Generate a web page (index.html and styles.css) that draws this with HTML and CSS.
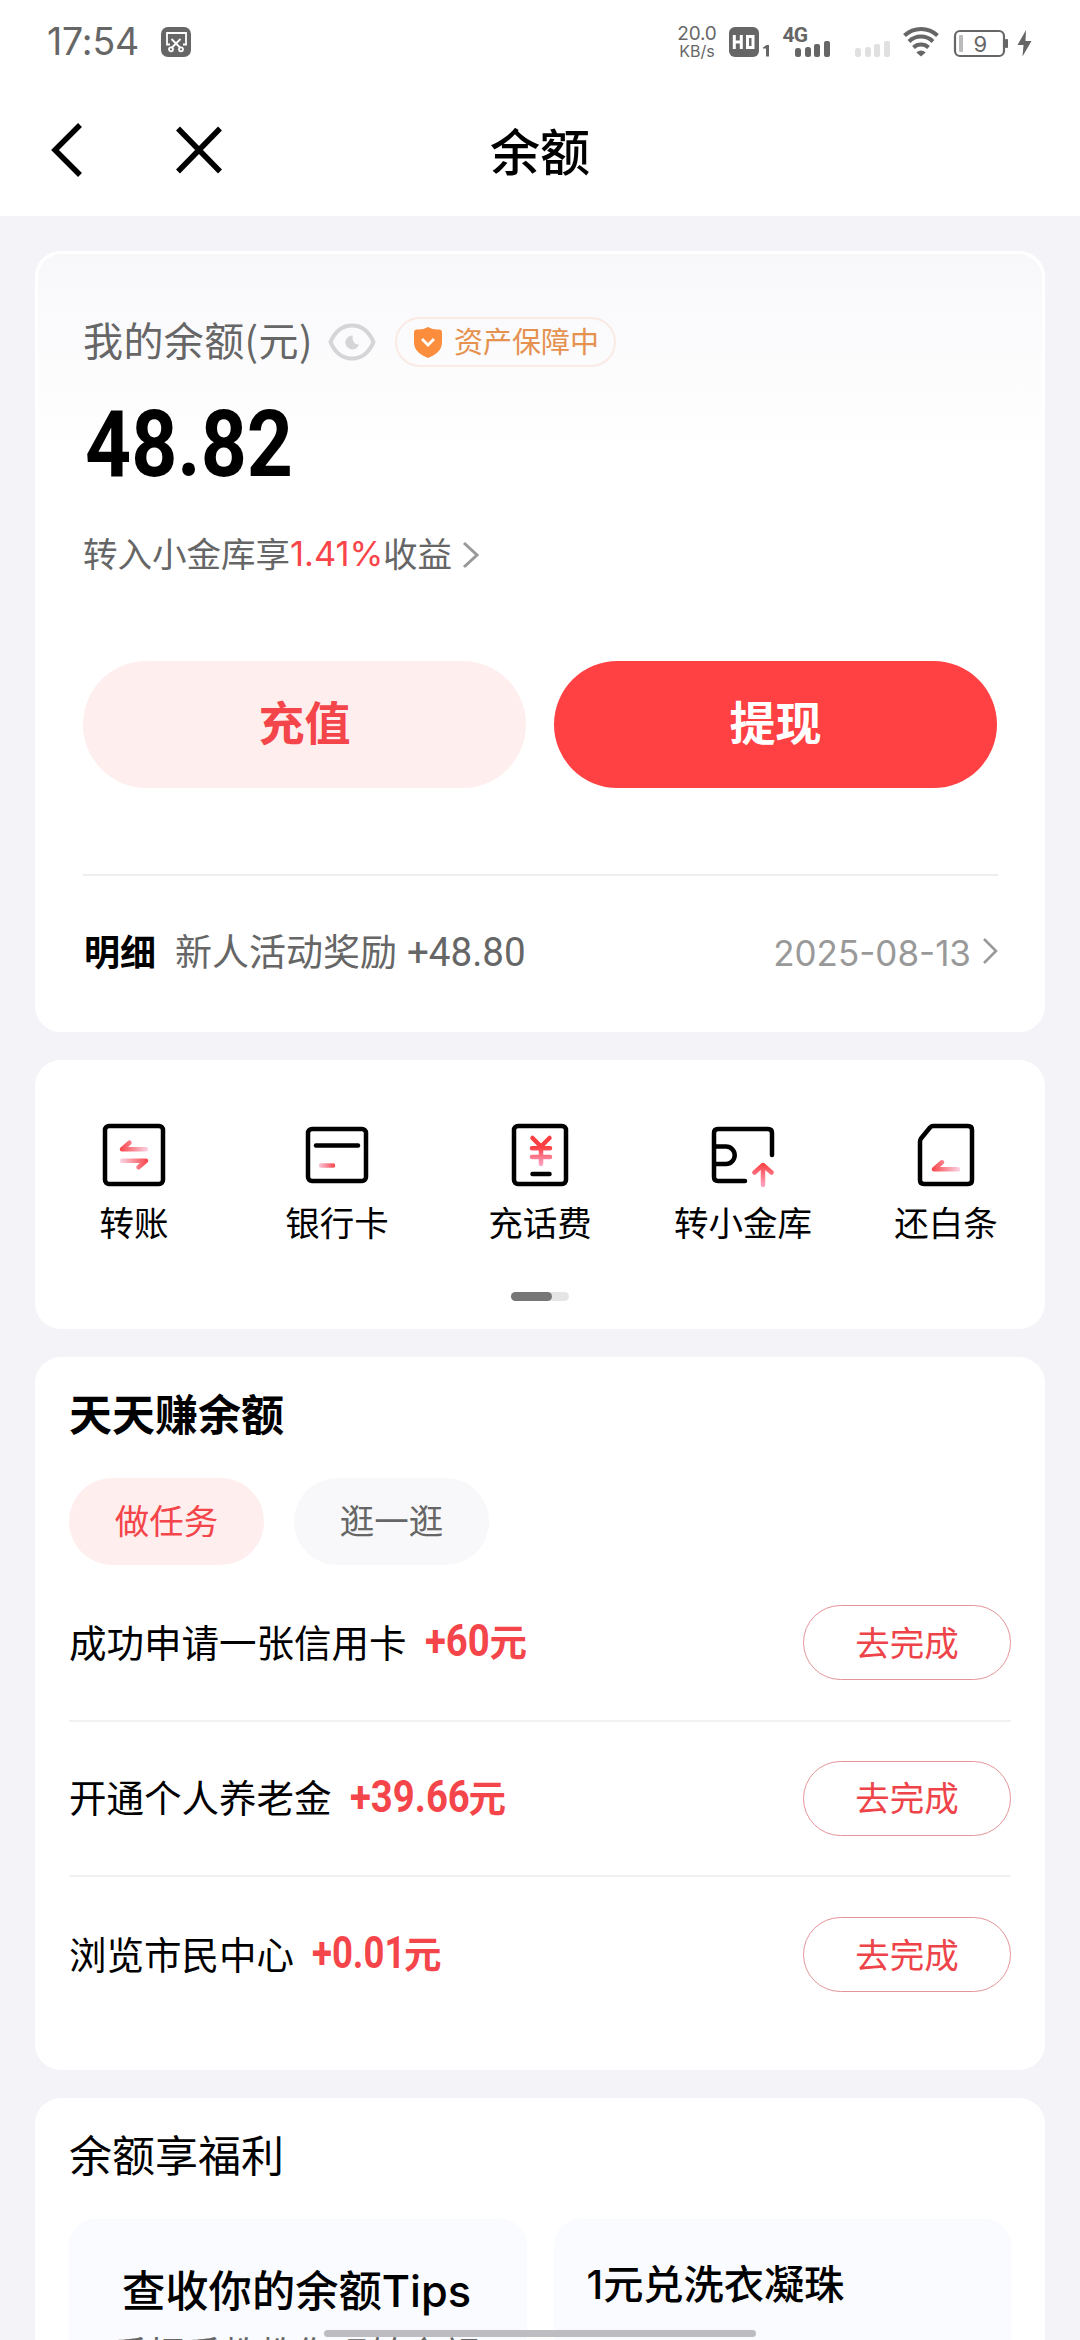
FILE: index.html
```html
<!DOCTYPE html>
<html lang="zh-CN">
<head>
<meta charset="utf-8">
<title>余额</title>
<link rel="stylesheet" href="styles.css">
</head>
<body>
<div class="screen">
  <header class="top">
    <div class="status">
      <span class="clock">17:54</span>
      <svg class="shot" width="30" height="30" viewBox="0 0 30 30" fill="none" stroke="#fff" stroke-width="1.8">
        <rect width="30" height="30" rx="7" fill="#666" stroke="none"/>
        <path d="M9 17.500H6V6h19v11.500h-3M10.500 12l9 9M19.500 12l-9 9"/>
        <circle cx="10" cy="22.300" r="2"/><circle cx="20" cy="22.300" r="2"/>
      </svg>
      <div class="speed"><span class="speed-num">20.0</span><span class="speed-unit">KB/s</span></div>
      <svg class="sys" width="310" height="32" viewBox="0 0 310 32" fill="#666">
        <rect x="1" y="1" width="30" height="30" rx="6"/>
        <path d="M6.300 9v14M13.300 9v14M6 16h7M19.500 10.500v11h5.500v-11z" stroke="#fff" stroke-width="3" fill="none"/>
        <path d="M35 21.500l3.500-2.500h2.500v11.500h-3v-8h-3z"/>
        <text x="54.500" y="16" class="net">4G</text>
        <rect x="67" y="22" width="6" height="9" rx="2.500"/><rect x="77" y="21" width="6" height="10" rx="2.500"/><rect x="86" y="18" width="6" height="13" rx="2"/><rect x="96" y="15" width="6" height="16" rx="2"/>
        <g fill="#e0e0e0"><rect x="127" y="22" width="6" height="9" rx="2.500"/><rect x="137" y="21" width="6" height="10" rx="2.500"/><rect x="146" y="18" width="6" height="13" rx="2"/><rect x="156" y="15" width="6" height="16" rx="2"/></g>
        <g fill="none" stroke="#666" stroke-width="4"><path d="M176.500 9.500a24 24 0 0 1 33 0"/><path d="M181 15.500a17 17 0 0 1 24 0"/><path d="M185.500 21.500a11 11 0 0 1 15 0"/></g>
        <path d="M188.300 26.500q4.700-4 9.400 0L193 30.500z"/>
        <rect x="227" y="5" width="49" height="25" rx="5" fill="none" stroke="#666" stroke-width="2.200"/>
        <rect x="277" y="13" width="3" height="9" rx="1"/>
        <rect x="231" y="9" width="4" height="17" rx="1" fill="#bbb"/>
        <text x="245.500" y="25.500" class="level">9</text>
        <path d="M298 4l-8.500 15h6l-1 11.500L303.500 15h-6z"/>
      </svg>
    </div>
    <nav class="nav">
      <svg class="back" width="34" height="56" viewBox="0 0 34 56" fill="none" stroke="#000" stroke-width="5.500"><path d="M31 3L6 28l25 25"/></svg>
      <svg class="close" width="48" height="48" viewBox="0 0 48 48" fill="none" stroke="#000" stroke-width="5.500"><path d="M3 2.500l42 43M45 2.500L3 45.500"/></svg>
      <h1 class="title">余额</h1>
    </nav>
  </header>

  <main class="cards">
    <section class="card balance">
      <div class="label-row">
        <span class="label">我的余额(元)</span>
        <svg class="eye" width="48" height="38" viewBox="0 0 48 38" fill="none"><path d="M2.500 19C7 8.500 14.500 2.500 24 2.500S41 8.500 45.500 19C41 29.500 33.500 35.500 24 35.500S7 29.500 2.500 19z" stroke="#d5d5d7" stroke-width="4"/><path d="M24.500 12.500a7 7 0 1 0 6.500 9q-7 .5-6.500-9z" fill="#d5d5d7"/></svg>
        <span class="badge">
          <svg width="28" height="31" viewBox="0 0 28 31"><path d="M3 2.500Q9 3 14 0q5 3 11 2.500q3 0 3 3V15c0 9-7 13-14 16C7 28 0 24 0 15V5.500q0-3 3-3z" fill="#fb8d3d"/><path d="M8 12l6 6 6-6" fill="none" stroke="#fff" stroke-width="2.800"/></svg>
          <span class="lift">资产保障中</span>
        </span>
      </div>
      <div class="amount"><span class="din">48.82</span></div>
      <div class="promo"><span class="lift">转入小金库享</span><span class="rate">1.41%</span><span class="lift">收益</span>
        <svg class="promo-arrow" width="18" height="28" viewBox="0 0 18 28" fill="none" stroke="#999" stroke-width="3"><path d="M2 2l13 12L2 26"/></svg></div>
      <div class="actions"><button class="btn soft">充值</button><button class="btn solid">提现</button></div>
      <div class="detail">
        <b class="detail-key lift">明细</b><span class="detail-text lift">新人活动奖励</span><span class="detail-num">+48.80</span>
        <span class="date">2025-08-13</span>
        <svg class="date-arrow" width="16" height="26" viewBox="0 0 16 26" fill="none" stroke="#999" stroke-width="2.600"><path d="M2 1l12 12L2 25"/></svg>
      </div>
    </section>

    <section class="card shortcuts">
      <svg class="defs" width="0" height="0"><defs>
        <linearGradient id="gl" gradientUnits="userSpaceOnUse" x1="18" y1="0" x2="46" y2="0"><stop offset="0" stop-color="#f8454a"/><stop offset="1" stop-color="#fbd5e5"/></linearGradient>
        <linearGradient id="gr" gradientUnits="userSpaceOnUse" x1="18" y1="0" x2="46" y2="0"><stop offset="0" stop-color="#fbd5e5"/><stop offset="1" stop-color="#f8454a"/></linearGradient>
        <linearGradient id="gs" gradientUnits="userSpaceOnUse" x1="14" y1="0" x2="30" y2="0"><stop offset="0" stop-color="#fbc5da"/><stop offset="1" stop-color="#f8454a"/></linearGradient>
        <linearGradient id="gd" gradientUnits="userSpaceOnUse" x1="0" y1="24" x2="0" y2="43"><stop offset="0" stop-color="#fc3f42"/><stop offset="1" stop-color="#fbaacb"/></linearGradient>
        <linearGradient id="gu" gradientUnits="userSpaceOnUse" x1="0" y1="40" x2="0" y2="64"><stop offset="0" stop-color="#fc3f42"/><stop offset="1" stop-color="#fbaac5"/></linearGradient>
      </defs></svg>
      <div class="grid">
        <div class="item"><svg class="ico" viewBox="0 0 64 64"><rect x="3" y="3" width="58" height="58" rx="4"/><path d="M44 26.200H20l7.500-6.500" stroke="url(#gl)"/><path d="M20 37.700h24l-7.500 6.500" stroke="url(#gr)"/></svg><span>转账</span></div>
        <div class="item"><svg class="ico" viewBox="0 0 64 64"><rect x="3" y="6" width="58" height="52" rx="4"/><path d="M11 22.500h42"/><path d="M16 42.500h12v.1" stroke="url(#gs)"/></svg><span>银行卡</span></div>
        <div class="item"><svg class="ico" viewBox="0 0 64 64"><rect x="6" y="3" width="52" height="58" rx="4"/><path d="M24.500 51h17"/><path d="M24.500 15l8.500 8.500 8.500-8.500M24 25.300h18M24 34h18M33 24.500V41" stroke="url(#gd)"/></svg><span>充话费</span></div>
        <div class="item"><svg class="ico" viewBox="0 0 64 64"><path d="M61 32V10q0-4-4-4H7Q3 6 3 10v44q0 4 4 4h27M4 23.500h11a8.700 8.700 0 0 1 0 17.400H4"/><path d="M52 62V42M43.500 49.500L52 42l8.500 7.500" stroke="url(#gu)"/></svg><span>转小金库</span></div>
        <div class="item"><svg class="ico" viewBox="0 0 64 64"><path d="M6 18.500V57q0 4 4 4h44q4 0 4-4V7q0-4-4-4H19q-1.500 0-3 1.500L7 15.500q-1 1.500-1 3z"/><path d="M44 46.500v-.2H20l8-7" stroke="url(#gl)"/></svg><span>还白条</span></div>
      </div>
      <div class="pager"><i></i></div>
    </section>

    <section class="card earn">
      <h2 class="h-bold">天天赚余额</h2>
      <div class="tabs"><span class="tab on">做任务</span><span class="tab">逛一逛</span></div>
      <div class="task"><span class="lift">成功申请一张信用卡</span><b><span class="num n3">+60</span>元</b><button class="go">去完成</button></div>
      <div class="task"><span class="lift">开通个人养老金</span><b><span class="num n6">+39.66</span>元</b><button class="go">去完成</button></div>
      <div class="task"><span class="lift">浏览市民中心</span><b><span class="num n5">+0.01</span>元</b><button class="go">去完成</button></div>
    </section>

    <section class="card perks">
      <h2 class="h-plain">余额享福利</h2>
      <div class="perk-row">
        <div class="perk first"><strong>查收你的余额Tips</strong><span>手把手教教你玩转余额</span></div>
        <div class="perk second"><strong>1元兑洗衣凝珠</strong></div>
      </div>
    </section>
  </main>
  <div class="home-bar"></div>
</div>
</body>
</html>
```

FILE: styles.css
```css
* { box-sizing: border-box; }
body { margin: 0; font-family: "Noto Sans CJK SC", sans-serif; color: #000; }
.screen { position: relative; width: 1080px; height: 2340px; overflow: hidden; background: #f3f3f8; display: flex; flex-direction: column; }
svg { display: block; flex: none; overflow: visible; }
h1, h2 { margin: 0; }
button { border: 0; padding: 0; font-family: inherit; background: none; }
.lift { padding-bottom: 5px; }

/* header */
.top { height: 216px; flex: none; background: #fff; }
.status { height: 84px; padding-left: 47px; display: flex; align-items: center; color: #666; }
.clock { flex: none; width: 114px; font: 400 37.500px/44px "Inter", sans-serif; letter-spacing: -.2px; }
.speed { flex: none; margin-left: 486px; width: 40px; display: flex; flex-direction: column; align-items: center; font-family: "Inter", sans-serif; }
.speed-num { font-size: 19px; line-height: 18px; letter-spacing: -.2px; }
.speed-unit { font-size: 16px; line-height: 16px; }
.sys { margin-left: 11px; }
.net { font: 700 21px "Roboto", sans-serif; letter-spacing: -.8px; }
.level { font: 22px "Inter", sans-serif; }
.nav { height: 132px; display: grid; grid-template-columns: 124px 366px 1fr; align-items: center; }
.back { margin-left: 49px; }
.close { margin-left: 51px; }
.title { font-size: 50px; line-height: 60px; font-weight: 500; margin-bottom: 2px; }

/* cards */
.cards { padding: 35px 35px 0; display: flex; flex-direction: column; gap: 28px; flex: none; }
.card { background: #fff; border-radius: 26px; flex: none; }
.balance { height: 781px; padding: 63px 44px 0 45px; border: 3px solid #fff; background: linear-gradient(#f8f8fb, #fff 200px); }
.label-row { display: flex; align-items: center; height: 50px; }
.label { font-size: 40px; line-height: 45px; letter-spacing: .4px; padding-bottom: 5px; color: #666; width: 245px; white-space: nowrap; }
.badge { margin-left: 19px; width: 221px; height: 50px; padding-left: 17px; border: 2px solid #faeae3; border-radius: 25px; display: flex; align-items: center; gap: 12px; color: #e5914f; font-size: 29px; line-height: 40px; white-space: nowrap; }
.amount { margin: 28px 0 0 2px; height: 100px; font: 700 93px/100px "Roboto", sans-serif; }
.din { display: inline-block; transform: scaleX(.865); transform-origin: 0 50%; }
.promo { margin-top: 35px; height: 50px; display: flex; align-items: center; font-size: 34.500px; color: #666; line-height: 45px; }
.rate { color: #f8454a; width: 93px; font-family: "Inter", sans-serif; font-size: 34.500px; letter-spacing: 0; line-height: 50px; padding-bottom: 2px; }
.promo-arrow { margin-left: 10px; }
.actions { margin-top: 81px; display: flex; gap: 28px; }
.btn { width: 443px; height: 127px; border-radius: 64px; font-size: 46px; font-weight: 700; line-height: 119px; padding-bottom: 8px; }
.soft { background: #ffeeee; color: #f4454a; }
.solid { background: #ff4144; color: #fff; }
.detail { margin-top: 86px; border-top: 2px solid #eee; height: 155px; padding-left: 1px; display: flex; align-items: center; color: #666; font-size: 37px; line-height: 45px; }
.detail-key { color: #000; font-size: 36px; width: 91px; }
.detail-text { width: 232px; }
.detail-num { font: 41px/48px "Roboto", sans-serif; padding-bottom: 2px; transform: scaleX(.94); transform-origin: 0 50%; }
.date { margin-left: auto; margin-right: 11px; color: #999; font: 35px/50px "Inter", sans-serif; }
.date-arrow { margin-bottom: 4px; }

.shortcuts { height: 269px; padding-top: 63px; }
.defs { position: absolute; }
.grid { display: grid; grid-template-columns: repeat(5, 203px); margin: 0 -2.500px; }
.item { display: flex; flex-direction: column; align-items: center; font-size: 34.500px; line-height: 50px; }
.item span { margin: 9px 0 2px; }
.ico { width: 64px; height: 64px; fill: none; stroke: #000; stroke-width: 4.500; stroke-linecap: round; stroke-linejoin: round; }
.pager { margin: 44px auto 0; width: 58px; height: 9px; border-radius: 5px; background: #e5e5e5; }
.pager i { display: block; width: 41px; height: 9px; border-radius: 5px; background: #777; }

.earn { height: 713px; padding: 25px 34px 0; }
.h-bold { font-size: 43px; line-height: 60px; font-weight: 700; }
.tabs { display: flex; gap: 30px; margin-top: 36px; margin-bottom: 1px; }
.tab { width: 195px; height: 87px; border-radius: 44px; background: #f8f8fa; color: #666; font-size: 34.500px; line-height: 83px; text-align: center; }
.tab.on { background: #ffeeee; color: #f4454a; }
.task { height: 155.500px; display: flex; align-items: center; font-size: 37.500px; line-height: 45px; border-bottom: 2px solid #f1f1f1; }
.task:last-child { border: 0; }
.task b { display: flex; align-items: baseline; margin-left: 18px; padding-bottom: 4px; color: #f4454a; font-size: 37.500px; }
.num { font-family: "Roboto", sans-serif; font-size: 44px; transform: scaleX(.87); transform-origin: 0 50%; }
.n3 { width: 65px; }
.n6 { width: 119px; }
.n5 { width: 92px; transform: scaleX(.83); }
.go { margin-left: auto; width: 208px; height: 75px; border: 1.500px solid #e59599; border-radius: 38px; color: #ee4449; font-size: 34.500px; line-height: 68px; padding-bottom: 4px; }

.perks { height: 300px; padding: 25px 34px 0; }
.h-plain { font-size: 43px; line-height: 60px; font-weight: 400; }
.perk-row { display: flex; gap: 27px; margin-top: 36px; }
.perk { width: 457.500px; height: 200px; border-radius: 26px; background: #fafbff; display: flex; flex-direction: column; }
.perk strong { font-family: "Inter", "Noto Sans CJK SC", sans-serif; font-weight: 500; white-space: nowrap; line-height: 60px; }
.first { padding: 42px 0 0 53px; }
.first strong { font-size: 43.300px; }
.first span { margin: 6px 0 0 -10px; font-size: 36.700px; line-height: 50px; color: #666; }
.second { padding: 36px 0 0 33px; }
.second strong { font-size: 40.200px; }
.home-bar { position: absolute; left: 324px; top: 2330px; width: 432px; height: 7px; border-radius: 4px; background: #bdbdc1; }
```
